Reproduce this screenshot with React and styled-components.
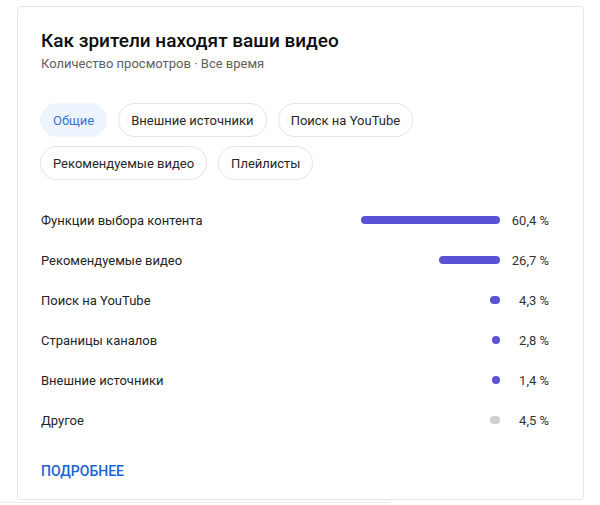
import React from "react";
import styled, { createGlobalStyle } from "styled-components";

const GlobalStyle = createGlobalStyle`
  html, body {
    margin: 0;
    padding: 0;
    background: #fff;
    font-family: Roboto, "Noto Sans", Arial, sans-serif;
  }
`;

const chips = [
  "Общие",
  "Внешние источники",
  "Поиск на YouTube",
  "Рекомендуемые видео",
  "Плейлисты",
];

const sources = [
  { label: "Функции выбора контента", value: 60.4 },
  { label: "Рекомендуемые видео", value: 26.7 },
  { label: "Поиск на YouTube", value: 4.3 },
  { label: "Страницы каналов", value: 2.8 },
  { label: "Внешние источники", value: 1.4 },
  { label: "Другое", value: 4.5, muted: true },
];

const App = () => {
  return (
    <Page>
      <GlobalStyle />
      <Card>
        <Title>Как зрители находят ваши видео</Title>
        <Subtitle>Количество просмотров · Все время</Subtitle>

        <Chips>
          {chips.map((c, i) => (
            <Chip key={c} $active={i === 0}>
              {c}
            </Chip>
          ))}
        </Chips>

        <Rows>
          {sources.map((s) => (
            <Row key={s.label}>
              <Label>{s.label}</Label>
              <Track>
                <Bar
                  $muted={s.muted}
                  style={{ width: Math.max(8, s.value * 2.3) }}
                />
              </Track>
              <Percent>{s.value.toFixed(1).replace(".", ",")} %</Percent>
            </Row>
          ))}
        </Rows>

        <More>ПОДРОБНЕЕ</More>
      </Card>
      <Shadow />
    </Page>
  );
};

export default App;

const Page = styled.div`
  padding: 6px 16px 0 17px;
  width: 600px;
  box-sizing: border-box;
`;

const Card = styled.section`
  box-sizing: border-box;
  width: 567px;
  height: 494px;
  border: 1px solid #e6e6e6;
  border-radius: 4px;
  padding: 21px 34px 0 23px;
  display: flex;
  flex-direction: column;
`;

const Shadow = styled.div`
  width: 389px;
  height: 1px;
  margin: 2px 0 0 -17px;
  background: #ececec;
`;

const Title = styled.h2`
  margin: 0;
  font-size: 19px;
  line-height: 26px;
  font-weight: 500;
  color: #0d0d0d;
`;

const Subtitle = styled.div`
  margin-top: 1px;
  font-size: 13px;
  line-height: 18px;
  color: #606060;
`;

const Chips = styled.div`
  display: flex;
  flex-wrap: wrap;
  gap: 9px 11px;
  margin: 30px 0 0 -1px;
  width: 400px;
`;

const Chip = styled.button`
  height: 34px;
  padding: 0 12px;
  border-radius: 17px;
  font-family: Roboto, "Noto Sans", Arial, sans-serif;
  font-size: 13px;
  cursor: pointer;
  border: 1px solid ${(p) => (p.$active ? "#eef4fe" : "#e3e3e3")};
  background: ${(p) => (p.$active ? "#eef4fe" : "#fff")};
  color: ${(p) => (p.$active ? "#3d74d6" : "#272727")};
`;

const Rows = styled.div`
  display: flex;
  flex-direction: column;
  margin-top: 20px;
`;

const Row = styled.div`
  height: 40px;
  display: grid;
  grid-template-columns: 1fr 240px 49px;
  align-items: center;
`;

const Label = styled.div`
  font-size: 13px;
  color: #242424;
`;

const Track = styled.div`
  display: flex;
  justify-content: flex-end;
`;

const Bar = styled.div`
  height: 8px;
  border-radius: 4px;
  background: ${(p) => (p.$muted ? "#cfcfcf" : "#5a51d4")};
`;

const Percent = styled.div`
  text-align: right;
  font-size: 13px;
  color: #333;
`;

const More = styled.a`
  margin-top: 23px;
  font-size: 14px;
  font-weight: 500;
  color: #1a62d6;
  cursor: pointer;
`;
